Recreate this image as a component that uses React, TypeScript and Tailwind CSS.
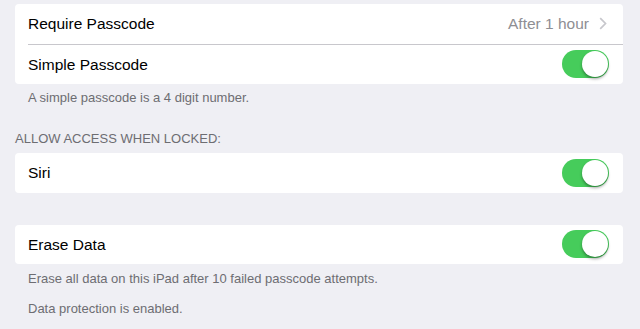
import React from "react";

const Toggle = () => (
  <div className="relative h-[28px] w-[47px] rounded-full bg-[#46cc5b]">
    <div className="absolute right-[1px] top-[1px] h-[26px] w-[26px] rounded-full bg-white shadow-[0_2px_3px_rgba(0,0,0,0.35)]" />
  </div>
);

const Row = ({ label, children }: { label: string; children?: React.ReactNode }) => (
  <div className="flex h-[39.5px] items-center justify-between pl-[13px] pr-[14px]">
    <span className="text-[15.5px] text-black">{label}</span>
    {children}
  </div>
);

const Note = ({ text, className = "" }: { text: string; className?: string }) => (
  <p className={`pl-[13px] text-[13px] leading-[16px] text-[#6d6d72] ${className}`}>{text}</p>
);

const App = () => {
  return (
    <div
      className="h-[329px] w-[640px] overflow-hidden bg-[#efeff4] pl-[15px] pr-[17px] pt-[4px]"
      style={{ fontFamily: '"Liberation Sans", Arial, sans-serif' }}
    >
      <div className="rounded-[4px] bg-white">
        <Row label="Require Passcode">
          <div className="flex items-center gap-[10px] pr-[2px]">
            <span className="text-[15.5px] text-[#8e8e93]">After 1 hour</span>
            <svg width="8" height="13" viewBox="0 0 8 13" fill="none">
              <path d="M1.2 1.2l5.3 5.3-5.3 5.3" stroke="#c7c7cc" strokeWidth="1.7" />
            </svg>
          </div>
        </Row>
        <div className="ml-[13px] h-px bg-[#c8c7cc]" />
        <Row label="Simple Passcode">
          <Toggle />
        </Row>
      </div>

      <Note text="A simple passcode is a 4 digit number." className="mt-[6px]" />

      <p className="mt-[25px] text-[13px] leading-[16px] text-[#6d6d72]">ALLOW ACCESS WHEN LOCKED:</p>

      <div className="mt-[6px] rounded-[4px] bg-white">
        <Row label="Siri">
          <Toggle />
        </Row>
      </div>

      <div className="mt-[32px] rounded-[4px] bg-white">
        <Row label="Erase Data">
          <Toggle />
        </Row>
      </div>

      <Note text="Erase all data on this iPad after 10 failed passcode attempts." className="mt-[7px]" />
      <Note text="Data protection is enabled." className="mt-[14px]" />
    </div>
  );
};

export default App;
